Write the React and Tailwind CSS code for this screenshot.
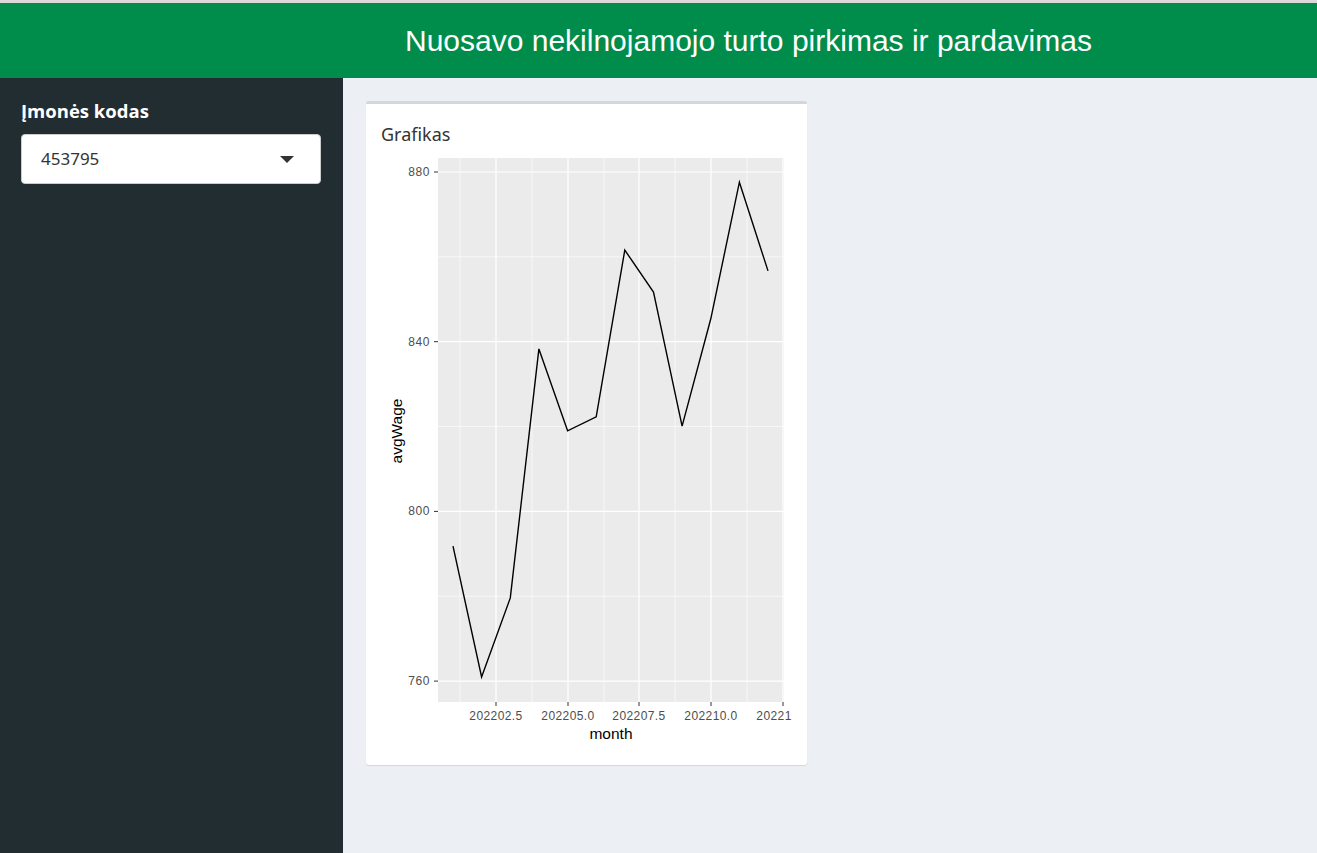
import React from "react";

const DATA = [791.8, 761, 779.6, 838.3, 819, 822.3, 861.6, 851.7, 820.1, 845.4, 877.6, 856.7];

// page pixel mapping for the ggplot panel
const xOf = (m) => 453 + (m - 1) * 28.64;
const yOf = (v) => 172 + (880 - v) * 4.2425;

const AXIS_FONT = "Liberation Sans, Arial, sans-serif";

function Plot() {
  const pts = DATA.map((v, i) => `${xOf(i + 1).toFixed(1)},${yOf(v).toFixed(1)}`).join(" ");
  const major = [880, 840, 800, 760];
  const minorY = [860, 820, 780];
  const majorX = [496, 568, 639, 711, 783];
  const minorX = [460, 532, 604, 675, 747];
  const xLabels = ["202202.5", "202205.0", "202207.5", "202210.0", "202212.5"];
  return (
    <svg width="411" height="605" viewBox="381 150 411 605" className="block">
      <rect x="438" y="158" width="346" height="544" fill="#ebebeb" />
      {minorY.map((v) => (
        <line key={v} x1="438" x2="784" y1={yOf(v)} y2={yOf(v)} stroke="#fff" strokeWidth="0.6" />
      ))}
      {minorX.map((x) => (
        <line key={x} x1={x} x2={x} y1="158" y2="702" stroke="#fff" strokeWidth="0.6" />
      ))}
      {major.map((v) => (
        <line key={v} x1="438" x2="784" y1={yOf(v)} y2={yOf(v)} stroke="#fff" strokeWidth="1.2" />
      ))}
      {majorX.map((x) => (
        <line key={x} x1={x} x2={x} y1="158" y2="702" stroke="#fff" strokeWidth="1.2" />
      ))}
      <polyline points={pts} fill="none" stroke="#000" strokeWidth="1.4" />
      {major.map((v) => (
        <g key={v}>
          <line x1="434" x2="438" y1={yOf(v)} y2={yOf(v)} stroke="#333" strokeWidth="1" />
          <text x="430" y={yOf(v) + 4} textAnchor="end" fontSize="12" letterSpacing="0.6" fill="#4d4d4d" fontFamily={AXIS_FONT}>
            {v}
          </text>
        </g>
      ))}
      {majorX.map((x, i) => (
        <g key={x}>
          <line x1={x} x2={x} y1="702" y2="706" stroke="#333" strokeWidth="1" />
          <text x={x} y="720" textAnchor="middle" fontSize="12" letterSpacing="0.4" fill="#4d4d4d" fontFamily={AXIS_FONT}>
            {xLabels[i]}
          </text>
        </g>
      ))}
      <text x="611" y="739" textAnchor="middle" fontSize="15.5" fill="#000" fontFamily={AXIS_FONT}>
        month
      </text>
      <text
        x="0"
        y="0"
        transform="translate(402 431) rotate(-90)"
        textAnchor="middle"
        fontSize="15.5"
        fill="#000"
        fontFamily={AXIS_FONT}
      >
        avgWage
      </text>
    </svg>
  );
}

export default function App() {
  return (
    <div className="h-[853px] flex flex-col bg-[#ecf0f5] overflow-hidden" style={{ fontFamily: '"Noto Sans", sans-serif' }}>
      <div className="h-[3px] bg-[#dadada]" />
      {/* Header */}
      <header className="h-[75px] bg-[#008d4c] flex items-center pl-[405px]">
        <h1 className="text-white text-[30px] font-normal" style={{ fontFamily: '"Liberation Sans", Arial, sans-serif' }}>
          Nuosavo nekilnojamojo turto pirkimas ir pardavimas
        </h1>
      </header>

      <div className="flex flex-1">
        {/* Sidebar */}
        <aside className="w-[343px] bg-[#222d32] px-[21px] pt-[20px]">
          <label className="block text-white text-[18.5px] font-bold leading-[26px]" style={{ fontFamily: '"Open Sans", sans-serif' }}>
            Įmonės kodas
          </label>
          <div className="mt-[10px] h-[50px] w-[300px] bg-white rounded-[4px] border border-[#cccccc] flex items-center justify-between pl-[19px] pr-[26px]">
            <span className="text-[17px] text-[#333]">453795</span>
            <span className="w-0 h-0 border-l-[7px] border-r-[7px] border-t-[7px] border-l-transparent border-r-transparent border-t-[#333]" />
          </div>
        </aside>

        {/* Content */}
        <main className="flex-1 pl-[23px] pt-[23px]">
          <section className="w-[441px] bg-white rounded-[3px] border-t-[3px] border-[#d2d6de] shadow-[0_1px_1px_rgba(0,0,0,0.1)]">
            <h3 className="px-[15px] pt-[18px] text-[18px] text-[#333] leading-[24px]">Grafikas</h3>
            <div className="px-[15px] pt-[4px] pb-[10px]">
              <Plot />
            </div>
          </section>
        </main>
      </div>
    </div>
  );
}
